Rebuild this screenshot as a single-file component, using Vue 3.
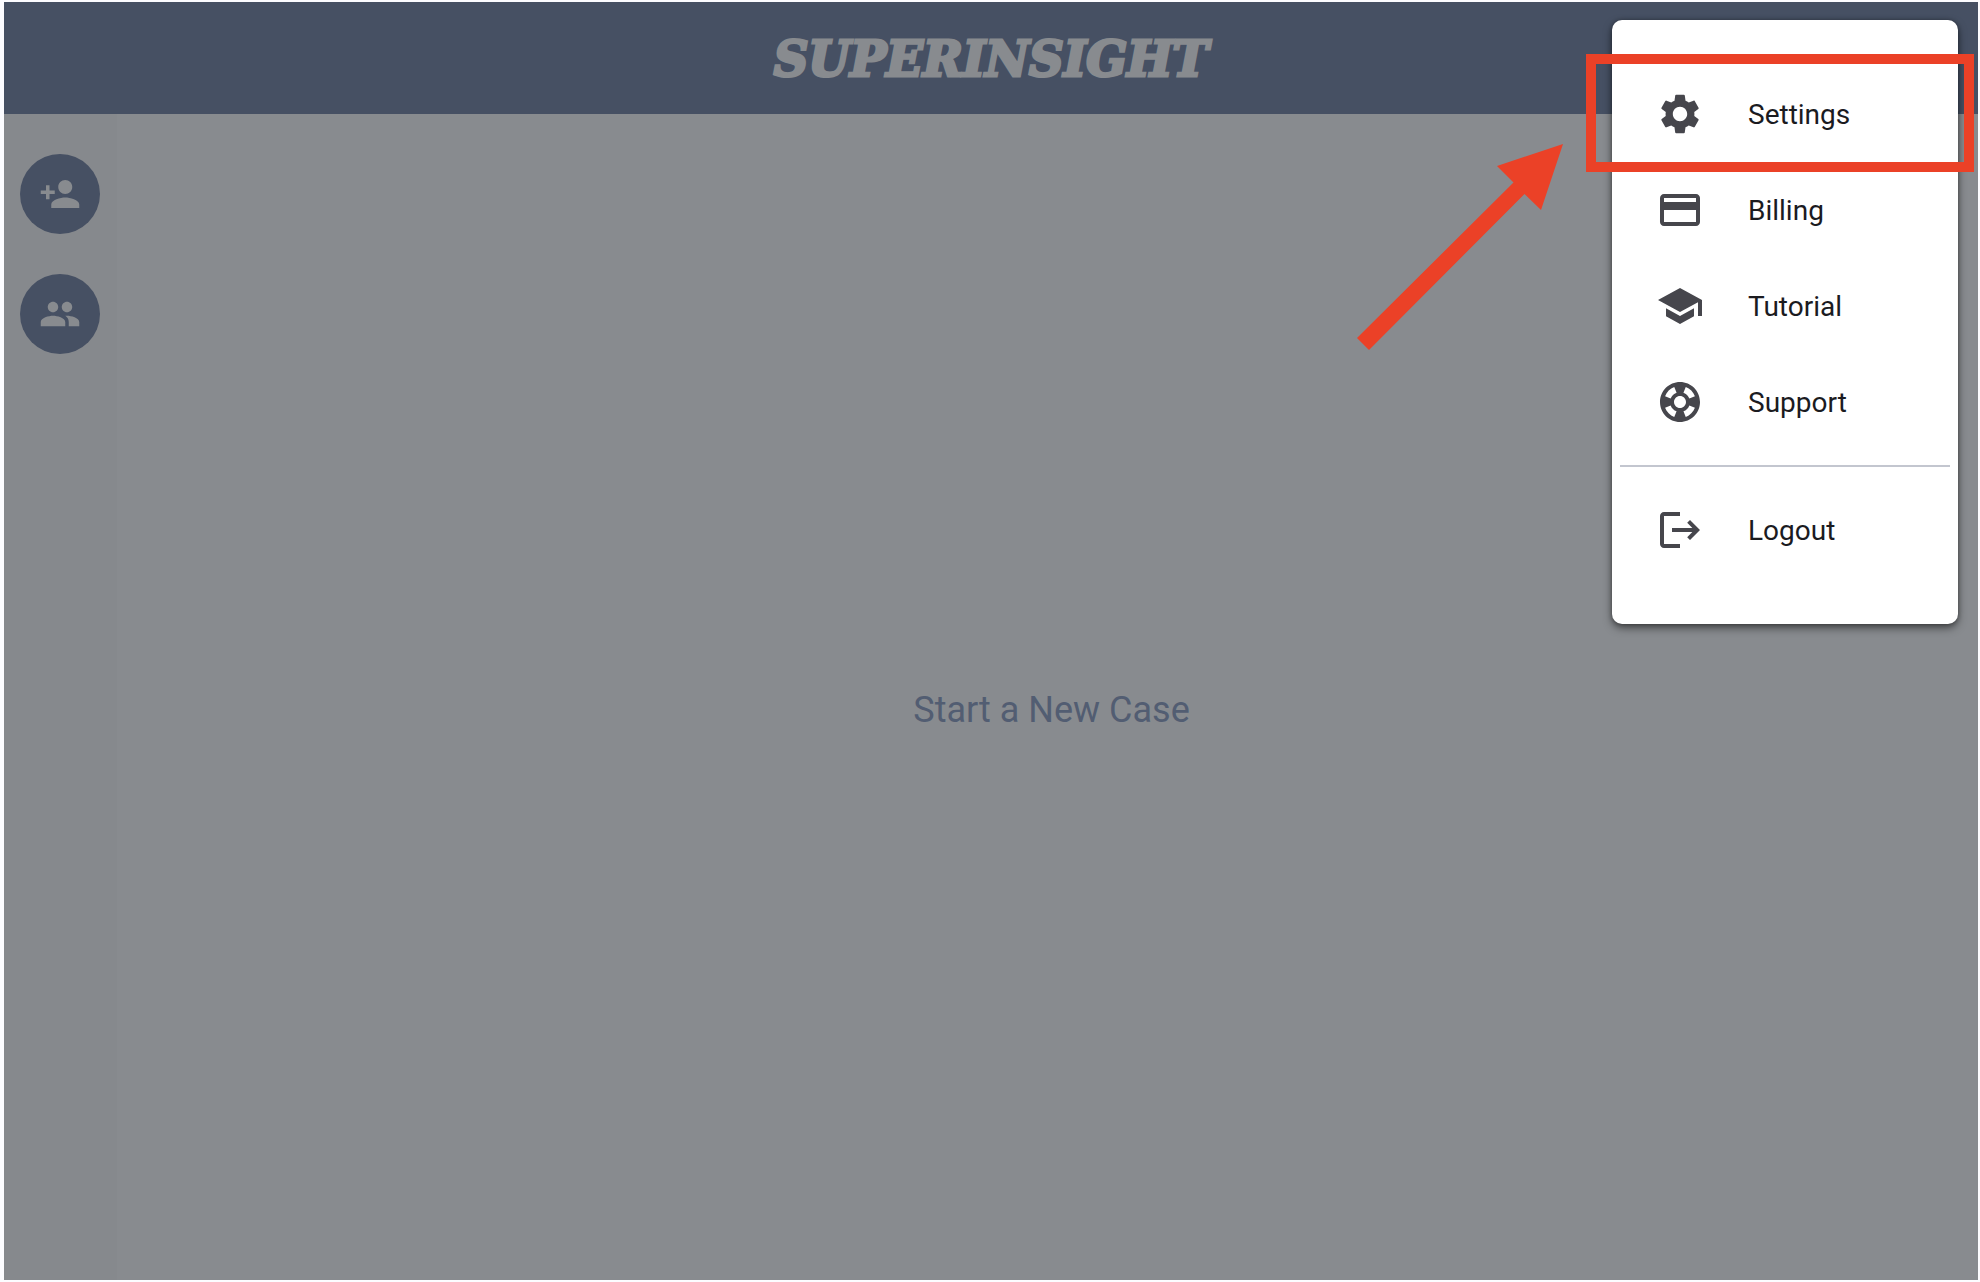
<script setup>
const accountLinks = [
  {
    label: 'Settings',
    highlighted: true,
    icon: 'M19.14 12.94c.04-.3.06-.61.06-.94 0-.32-.02-.64-.07-.94l2.03-1.58c.18-.14.23-.41.12-.61l-1.92-3.32c-.12-.22-.37-.29-.59-.22l-2.39.96c-.5-.38-1.03-.7-1.62-.94l-.36-2.54c-.04-.24-.24-.41-.48-.41h-3.84c-.24 0-.43.17-.47.41l-.36 2.54c-.59.24-1.13.57-1.62.94l-2.39-.96c-.22-.08-.47 0-.59.22L2.74 8.87c-.12.21-.08.47.12.61l2.03 1.58c-.05.3-.09.63-.09.94s.02.64.07.94l-2.03 1.58c-.18.14-.23.41-.12.61l1.92 3.32c.12.22.37.29.59.22l2.39-.96c.5.38 1.03.7 1.62.94l.36 2.54c.05.24.24.41.48.41h3.84c.24 0 .44-.17.47-.41l.36-2.54c.59-.24 1.13-.56 1.62-.94l2.39.96c.22.08.47 0 .59-.22l1.92-3.32c.12-.22.07-.47-.12-.61l-2.01-1.58zM12 15.6c-1.98 0-3.6-1.62-3.6-3.6s1.62-3.6 3.6-3.6 3.6 1.62 3.6 3.6-1.62 3.6-3.6 3.6z',
  },
  {
    label: 'Billing',
    icon: 'M20 4H4c-1.11 0-1.99.89-1.99 2L2 18c0 1.11.89 2 2 2h16c1.11 0 2-.89 2-2V6c0-1.11-.89-2-2-2zm0 14H4v-6h16v6zm0-10H4V6h16v2z',
  },
  {
    label: 'Tutorial',
    icon: 'M5 13.18v4L12 21l7-3.82v-4L12 17l-7-3.82zM12 3 1 9l11 6 9-4.91V17h2V9L12 3z',
  },
  {
    label: 'Support',
    icon: 'M12 2C6.48 2 2 6.48 2 12s4.48 10 10 10 10-4.48 10-10S17.52 2 12 2zm7.46 7.12-2.78 1.15c-.51-1.36-1.58-2.44-2.95-2.94l1.15-2.78c2.1.8 3.77 2.47 4.58 4.57zM12 15c-1.66 0-3-1.34-3-3s1.34-3 3-3 3 1.34 3 3-1.34 3-3 3zM9.13 4.54l1.17 2.78c-1.38.5-2.47 1.59-2.98 2.97L4.54 9.13c.81-2.11 2.48-3.78 4.59-4.59zM4.54 14.87l2.78-1.15c.51 1.38 1.59 2.46 2.97 2.96l-1.17 2.78c-2.1-.81-3.77-2.48-4.58-4.59zm10.34 4.59-1.15-2.78c1.37-.51 2.45-1.59 2.95-2.97l2.78 1.17c-.81 2.1-2.48 3.77-4.58 4.58z',
  },
]

const caseActions = [
  {
    label: 'Add client',
    icon: 'M15 12c2.21 0 4-1.79 4-4s-1.79-4-4-4-4 1.79-4 4 1.79 4 4 4zm-9-2V7H4v3H1v2h3v3h2v-3h3v-2H6zm9 4c-2.67 0-8 1.34-8 4v2h16v-2c0-2.66-5.33-4-8-4z',
  },
  {
    label: 'Clients',
    icon: 'M16 11c1.66 0 2.99-1.34 2.99-3S17.66 5 16 5s-3 1.34-3 3 1.34 3 3 3zm-8 0c1.66 0 2.99-1.34 2.99-3S9.66 5 8 5 5 6.34 5 8s1.34 3 3 3zm0 2c-2.33 0-7 1.17-7 3.5V19h14v-2.5c0-2.33-4.67-3.5-7-3.5zm8 0c-.29 0-.62.02-.97.05 1.16.84 1.97 1.97 1.97 3.45V19h6v-2.5c0-2.33-4.67-3.5-7-3.5z',
  },
]
</script>

<template>
  <div class="page">
    <div class="app">
      <header class="topbar">
        <h1 class="brand">SUPERINSIGHT</h1>
      </header>

      <div class="workspace">
        <nav class="rail">
          <button
            v-for="action in caseActions"
            :key="action.label"
            type="button"
            class="round"
            :aria-label="action.label"
          >
            <svg class="round-icon" viewBox="0 0 24 24" aria-hidden="true"><path :d="action.icon" /></svg>
          </button>
        </nav>
        <main class="content">
          <p class="empty">Start a New Case</p>
        </main>
      </div>

      <div class="menu">
        <button v-for="item in accountLinks" :key="item.label" type="button" class="item">
          <svg class="item-icon" viewBox="0 0 24 24" aria-hidden="true"><path :d="item.icon" /></svg>
          <span class="item-label">{{ item.label }}</span>
          <span v-if="item.highlighted" class="highlight"></span>
        </button>
        <hr class="divider" />
        <button type="button" class="item">
          <svg class="item-icon" viewBox="0 0 24 24" aria-hidden="true">
            <path d="M17 7l-1.41 1.41L18.17 11H8v2h10.17l-2.58 2.58L17 17l5-5zM4 5h8V3H4c-1.1 0-2 .9-2 2v14c0 1.1.9 2 2 2h8v-2H4V5z" />
          </svg>
          <span class="item-label">Logout</span>
        </button>
        <svg class="pointer" viewBox="0 0 206 206" aria-hidden="true">
          <path d="M206 0 184 66 167.500 50 12 206 0 194 156.500 38.500 140 22z" />
        </svg>
      </div>
    </div>
  </div>
</template>

<style>
body {
  background: #fcfcff;
}
</style>

<style scoped>
.page {
  box-sizing: border-box;
  display: flex;
  min-height: 100vh;
  padding: 2px 2px 2px 4px;
  font-family: Roboto, "Liberation Sans", sans-serif;
}

.app {
  position: relative;
  flex: 1;
  display: flex;
  flex-direction: column;
  background: #888b8f;
}

.topbar {
  display: flex;
  align-items: center;
  justify-content: center;
  height: 112px;
  background: #465063;
}

.brand {
  margin: 0;
  padding-top: 2px;
  font-family: "DejaVu Serif", serif;
  font-size: 48px;
  font-weight: 700;
  font-style: italic;
  line-height: 60px;
  color: #888b8f;
  -webkit-text-stroke: 3px #888b8f;
}

.workspace {
  flex: 1;
  display: flex;
}

.rail {
  box-sizing: border-box;
  width: 113px;
  padding: 40px 16px;
  display: flex;
  flex-direction: column;
  gap: 40px;
  background: #86898d;
}

.round {
  display: flex;
  align-items: center;
  justify-content: center;
  width: 80px;
  height: 80px;
  padding: 0;
  border: 0;
  border-radius: 50%;
  background: #465063;
}

.round-icon {
  width: 42px;
  height: 42px;
  fill: #888b8f;
}

.content {
  flex: 1;
  display: flex;
  align-items: center;
  justify-content: center;
  padding: 26px 0 0 8px;
}

.empty {
  margin: 0;
  font-size: 36px;
  line-height: 44px;
  color: #525d72;
}

.menu {
  position: absolute;
  top: 18px;
  right: 20px;
  box-sizing: border-box;
  width: 346px;
  padding: 46px 0;
  border-radius: 10px;
  background: #fff;
  box-shadow: 0 4px 8px rgba(0, 0, 0, 0.5), 0 0 4px rgba(0, 0, 0, 0.3);
}

.item {
  position: relative;
  display: flex;
  align-items: center;
  gap: 44px;
  width: 100%;
  height: 96px;
  padding: 0 44px;
  border: 0;
  background: none;
  font: 400 28px/36px Roboto, "Liberation Sans", sans-serif;
  color: #1b1b1f;
  text-align: left;
}

.item-icon {
  width: 48px;
  height: 48px;
  fill: #46464c;
}

.item-label {
  padding-top: 2px;
}

.divider {
  height: 2px;
  margin: 15px 8px;
  border: 0;
  background: #c3c6cf;
}

.highlight {
  position: absolute;
  inset: -12px -16px -10px -26px;
  border: 10px solid #eb4127;
}

.pointer {
  position: absolute;
  top: 124px;
  right: 395px;
  width: 206px;
  height: 206px;
  fill: #eb4127;
}
</style>
